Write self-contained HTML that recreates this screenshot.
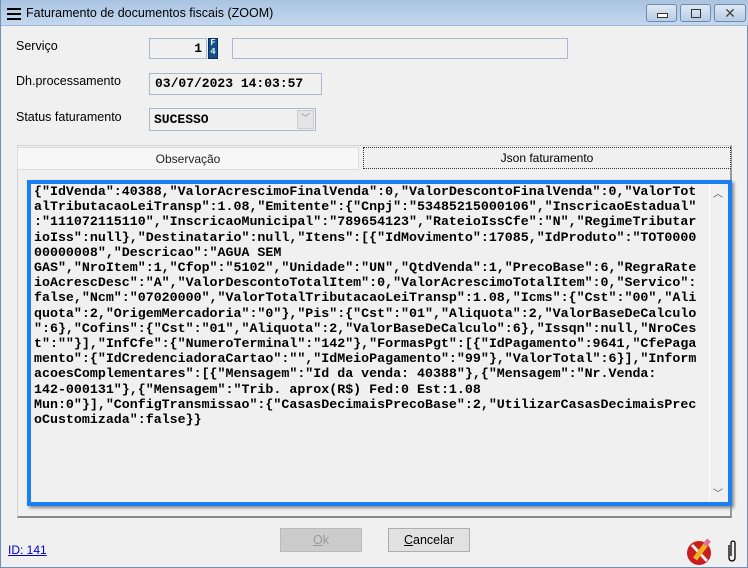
<!DOCTYPE html>
<html><head><meta charset="utf-8"><style>
*{margin:0;padding:0;box-sizing:border-box}
body{width:748px;height:568px;overflow:hidden;background:#f0f0f0;font-family:"Liberation Sans",Arial,sans-serif;font-size:12px;color:#000;position:relative}
.win{position:absolute;left:0;top:0;width:748px;height:568px;border:1px solid #6d8fb8;border-top:none;background:#f0f0f0}
.title{position:absolute;left:0;top:0;width:748px;height:26px;background:linear-gradient(#a9c3e0,#c4d8ee);border-bottom:1px solid #9fb9d6}
.title .t{position:absolute;left:25px;top:6px;font-size:12.5px;color:#000}
.menu{position:absolute;left:6px;top:8px;width:14px}
.menu i{display:block;height:1.5px;background:#000;margin-bottom:3.5px}
.btn{position:absolute;top:4px;height:18px;border:1px solid #6f8aab;border-radius:3px;background:linear-gradient(#dfe9f5,#b8cce4)}
.lbl{position:absolute;font-size:12.5px}
.box{position:absolute;border:1px solid #a7b8cf;background:#f0f0f0}
.mono{font-family:"Liberation Mono",monospace;font-weight:bold}
.tab{position:absolute;top:147px;height:23px;text-align:center;line-height:22px;font-size:12px}
.ta{position:absolute;left:26px;top:180px;width:705px;height:326px;border:4px solid #1a7ff0;background:#f0f0f0;box-shadow:2px 2px 3px #888}
.ta pre{position:absolute;left:3px;top:0px;font-family:"Liberation Mono",monospace;font-weight:bold;font-size:13.3px;line-height:15.2px;white-space:pre;color:#000}
.pb{position:absolute;height:24px;border:1px solid #adadad;text-align:center;line-height:22px;font-size:12.5px}
</style></head><body>
<div class="win">
<div class="title"><div class="menu"><i></i><i></i><i></i></div><div class="t">Faturamento de documentos  fiscais (ZOOM)</div>
<div class="btn" style="left:645px;width:31px"><div style="position:absolute;left:10px;top:8px;width:11px;height:5px;border:1px solid #333;background:#fff"></div></div>
<div class="btn" style="left:679px;width:31px"><div style="position:absolute;left:10px;top:4px;width:10px;height:9px;border:1px solid #333"></div></div>
<div class="btn" style="left:713px;width:32px;text-align:center;line-height:16px;font-size:14px;color:#444">✕</div>
</div>
<div class="lbl" style="left:15px;top:39px">Serviço</div>
<div class="box mono" style="left:148px;top:38px;width:58px;height:21px;text-align:right;padding-right:4px;line-height:19px;font-size:13px">1</div>
<div style="position:absolute;left:207px;top:38px;width:10px;height:21px;background:#1a4d8c;border:1px solid #0a2c5c;color:#cfe;font-size:9px;font-family:'Liberation Mono';font-weight:bold;line-height:9px;text-align:center">F<br>4</div>
<div class="box" style="left:231px;top:38px;width:336px;height:21px"></div>
<div class="lbl" style="left:15px;top:74px">Dh.processamento</div>
<div class="box mono" style="left:148px;top:73px;width:173px;height:22px;padding-left:5px;line-height:20px;font-size:13px">03/07/2023 14:03:57</div>
<div class="lbl" style="left:15px;top:110px">Status faturamento</div>
<div class="box mono" style="left:148px;top:108px;width:167px;height:23px;padding-left:4px;line-height:21px;font-size:13px">SUCESSO<div style="position:absolute;right:1px;top:1px;width:17px;height:19px;background:#e4e4e4;border:1px solid #ccc;color:#aaa;font-size:9px;text-align:center;line-height:17px">﹀</div></div>
<div style="position:absolute;left:16px;top:145px;width:715px;height:373px;border:1px solid #d4d4d4;border-right:2px solid #999;border-bottom:2px solid #888"></div>
<div class="tab" style="left:16px;width:342px;background:#f7f7f7;border:1px solid #dcdcdc;color:#222">Observação</div>
<div class="tab" style="left:362px;width:368px;height:22px;border:1px dotted #333;background:#f0f0f0;line-height:20px">Json faturamento</div>
<div class="ta"><pre>{"IdVenda":40388,"ValorAcrescimoFinalVenda":0,"ValorDescontoFinalVenda":0,"ValorTot
alTributacaoLeiTransp":1.08,"Emitente":{"Cnpj":"53485215000106","InscricaoEstadual"
:"111072115110","InscricaoMunicipal":"789654123","RateioIssCfe":"N","RegimeTributar
ioIss":null},"Destinatario":null,"Itens":[{"IdMovimento":17085,"IdProduto":"TOT0000
00000008","Descricao":"AGUA SEM
GAS","NroItem":1,"Cfop":"5102","Unidade":"UN","QtdVenda":1,"PrecoBase":6,"RegraRate
ioAcrescDesc":"A","ValorDescontoTotalItem":0,"ValorAcrescimoTotalItem":0,"Servico":
false,"Ncm":"07020000","ValorTotalTributacaoLeiTransp":1.08,"Icms":{"Cst":"00","Ali
quota":2,"OrigemMercadoria":"0"},"Pis":{"Cst":"01","Aliquota":2,"ValorBaseDeCalculo
":6},"Cofins":{"Cst":"01","Aliquota":2,"ValorBaseDeCalculo":6},"Issqn":null,"NroCes
t":""}],"InfCfe":{"NumeroTerminal":"142"},"FormasPgt":[{"IdPagamento":9641,"CfePaga
mento":{"IdCredenciadoraCartao":"","IdMeioPagamento":"99"},"ValorTotal":6}],"Inform
acoesComplementares":[{"Mensagem":"Id da venda: 40388"},{"Mensagem":"Nr.Venda:
142-000131"},{"Mensagem":"Trib. aprox(R$) Fed:0 Est:1.08
Mun:0"}],"ConfigTransmissao":{"CasasDecimaisPrecoBase":2,"UtilizarCasasDecimaisPrec
oCustomizada":false}}</pre>
<div style="position:absolute;right:5px;top:1px;color:#555;font-size:10px">︿</div>
<div style="position:absolute;right:18px;top:0;width:1px;height:318px;background:#fff"></div>
<div style="position:absolute;right:5px;bottom:2px;color:#555;font-size:10px">﹀</div>
</div>
<div class="pb" style="left:279px;top:528px;width:82px;background:#cccccc;color:#999;border-color:#bbb"><u>O</u>k</div>
<div class="pb" style="left:387px;top:528px;width:82px;background:#e1e1e1"><u>C</u>ancelar</div>
<div style="position:absolute;left:7px;top:543px;font-size:12px;color:#0000cc;text-decoration:underline">ID: 141</div>
<svg style="position:absolute;left:684px;top:535px" width="32" height="32" viewBox="0 0 32 32">
<circle cx="14" cy="18" r="12" fill="#c81e1e"/>
<path d="M7 10 L22 26" stroke="#f0f0f0" stroke-width="3"/>
<path d="M10 24 L22 8" stroke="#f0b020" stroke-width="5"/><path d="M20 10 L24 5" stroke="#e07090" stroke-width="5"/>
</svg>
<svg style="position:absolute;left:725px;top:539px" width="12" height="24" viewBox="0 0 12 24"><path d="M3 6 V19 a3 3 0 0 0 6 0 V4 a2 2 0 0 0 -4 0 V17" fill="none" stroke="#000" stroke-width="1.3"/></svg>
</div>
</body></html>
